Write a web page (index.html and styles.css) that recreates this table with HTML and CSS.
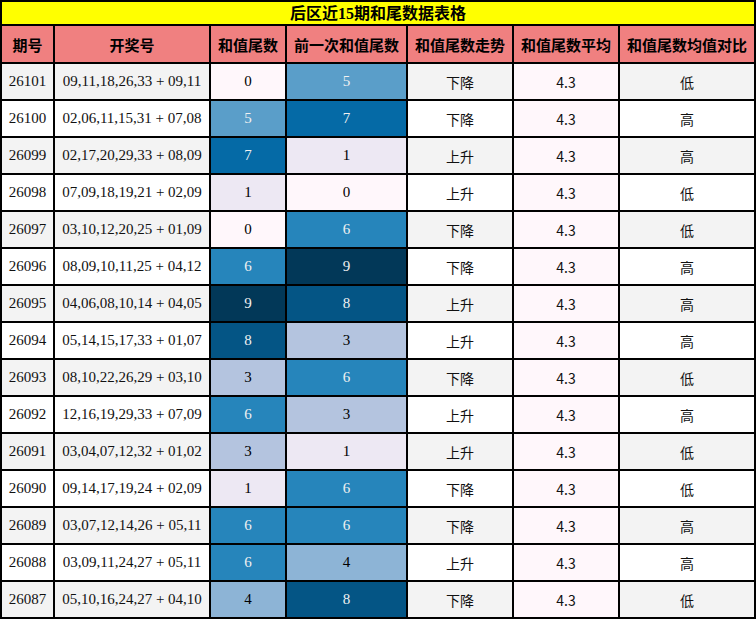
FILE: index.html
```html
<!DOCTYPE html>
<html lang="zh">
<head>
<meta charset="utf-8">
<title>后区近15期和尾数据表格</title>
<link rel="stylesheet" href="styles.css">
</head>
<body>
<div class="sheet">
  <div class="title">后区近15期和尾数据表格</div>
  <div class="hd">期号</div><div class="hd">开奖号</div><div class="hd">和值尾数</div><div class="hd">前一次和值尾数</div><div class="hd">和值尾数走势</div><div class="hd">和值尾数平均</div><div class="hd">和值尾数均值对比</div>

  <div class="c num odd">26101</div><div class="c num odd">09,11,18,26,33 + 09,11</div><div class="c num v0">0</div><div class="c num v5">5</div><div class="c cjk odd">下降</div><div class="c cjk avg">4.3</div><div class="c cjk odd">低</div>
  <div class="c num">26100</div><div class="c num">02,06,11,15,31 + 07,08</div><div class="c num v5">5</div><div class="c num v7">7</div><div class="c cjk">下降</div><div class="c cjk avg">4.3</div><div class="c cjk">高</div>
  <div class="c num odd">26099</div><div class="c num odd">02,17,20,29,33 + 08,09</div><div class="c num v7">7</div><div class="c num v1">1</div><div class="c cjk odd">上升</div><div class="c cjk avg">4.3</div><div class="c cjk odd">高</div>
  <div class="c num">26098</div><div class="c num">07,09,18,19,21 + 02,09</div><div class="c num v1">1</div><div class="c num v0">0</div><div class="c cjk">上升</div><div class="c cjk avg">4.3</div><div class="c cjk">低</div>
  <div class="c num odd">26097</div><div class="c num odd">03,10,12,20,25 + 01,09</div><div class="c num v0">0</div><div class="c num v6">6</div><div class="c cjk odd">下降</div><div class="c cjk avg">4.3</div><div class="c cjk odd">低</div>
  <div class="c num">26096</div><div class="c num">08,09,10,11,25 + 04,12</div><div class="c num v6">6</div><div class="c num v9">9</div><div class="c cjk">下降</div><div class="c cjk avg">4.3</div><div class="c cjk">高</div>
  <div class="c num odd">26095</div><div class="c num odd">04,06,08,10,14 + 04,05</div><div class="c num v9">9</div><div class="c num v8">8</div><div class="c cjk odd">上升</div><div class="c cjk avg">4.3</div><div class="c cjk odd">高</div>
  <div class="c num">26094</div><div class="c num">05,14,15,17,33 + 01,07</div><div class="c num v8">8</div><div class="c num v3">3</div><div class="c cjk">上升</div><div class="c cjk avg">4.3</div><div class="c cjk">高</div>
  <div class="c num odd">26093</div><div class="c num odd">08,10,22,26,29 + 03,10</div><div class="c num v3">3</div><div class="c num v6">6</div><div class="c cjk odd">下降</div><div class="c cjk avg">4.3</div><div class="c cjk odd">低</div>
  <div class="c num">26092</div><div class="c num">12,16,19,29,33 + 07,09</div><div class="c num v6">6</div><div class="c num v3">3</div><div class="c cjk">上升</div><div class="c cjk avg">4.3</div><div class="c cjk">高</div>
  <div class="c num odd">26091</div><div class="c num odd">03,04,07,12,32 + 01,02</div><div class="c num v3">3</div><div class="c num v1">1</div><div class="c cjk odd">上升</div><div class="c cjk avg">4.3</div><div class="c cjk odd">低</div>
  <div class="c num">26090</div><div class="c num">09,14,17,19,24 + 02,09</div><div class="c num v1">1</div><div class="c num v6">6</div><div class="c cjk">下降</div><div class="c cjk avg">4.3</div><div class="c cjk">低</div>
  <div class="c num odd">26089</div><div class="c num odd">03,07,12,14,26 + 05,11</div><div class="c num v6">6</div><div class="c num v6">6</div><div class="c cjk odd">下降</div><div class="c cjk avg">4.3</div><div class="c cjk odd">高</div>
  <div class="c num">26088</div><div class="c num">03,09,11,24,27 + 05,11</div><div class="c num v6">6</div><div class="c num v4">4</div><div class="c cjk">上升</div><div class="c cjk avg">4.3</div><div class="c cjk">高</div>
  <div class="c num odd">26087</div><div class="c num odd">05,10,16,24,27 + 04,10</div><div class="c num v4">4</div><div class="c num v8">8</div><div class="c cjk odd">下降</div><div class="c cjk avg">4.3</div><div class="c cjk odd">低</div>
</div>
</body>
</html>
```
FILE: styles.css
```css
html, body {
  margin: 0;
  padding: 0;
  background: #ffffff;
}

.sheet {
  display: grid;
  grid-template-columns: 51px 154px 74px 119px 104px 104px 134px;
  grid-template-rows: 22px 36px repeat(15, 35px);
  gap: 2px;
  padding: 2px;
  background: #000000;
  width: 756px;
  box-sizing: border-box;
}

.title {
  grid-column: 1 / -1;
  background: #ffff00;
  color: #000;
  font-family: "Liberation Serif", "Noto Sans CJK SC", serif;
  font-weight: bold;
  font-size: 16px;
  display: flex;
  align-items: center;
  justify-content: center;
  line-height: 1;
  padding-top: 1px;
}

.hd {
  background: #f08080;
  color: #000;
  font-family: "Liberation Serif", "Noto Sans CJK SC", serif;
  font-weight: bold;
  font-size: 15px;
  display: flex;
  align-items: center;
  justify-content: center;
  white-space: nowrap;
}

.c {
  background: #ffffff;
  color: #111111;
  display: flex;
  align-items: center;
  justify-content: center;
  white-space: nowrap;
}

.num {
  font-family: "Liberation Serif", "Noto Sans CJK SC", serif;
  font-size: 15px;
}

.cjk {
  font-family: "Noto Sans CJK SC", sans-serif;
  font-size: 14px;
}

.odd { background: #f3f3f3; }
.avg { background: #fff7fb; color: #111111; }

.v0 { background: #fff7fb; color: #000000; }
.v1 { background: #ede8f3; color: #000000; }
.v3 { background: #b4c4df; color: #000000; }
.v4 { background: #8db4d6; color: #000000; }
.v5 { background: #5a9ec9; color: #f1f1f1; }
.v6 { background: #2685bb; color: #f1f1f1; }
.v7 { background: #056aa6; color: #f1f1f1; }
.v8 { background: #045585; color: #f1f1f1; }
.v9 { background: #023858; color: #f1f1f1; }
```
